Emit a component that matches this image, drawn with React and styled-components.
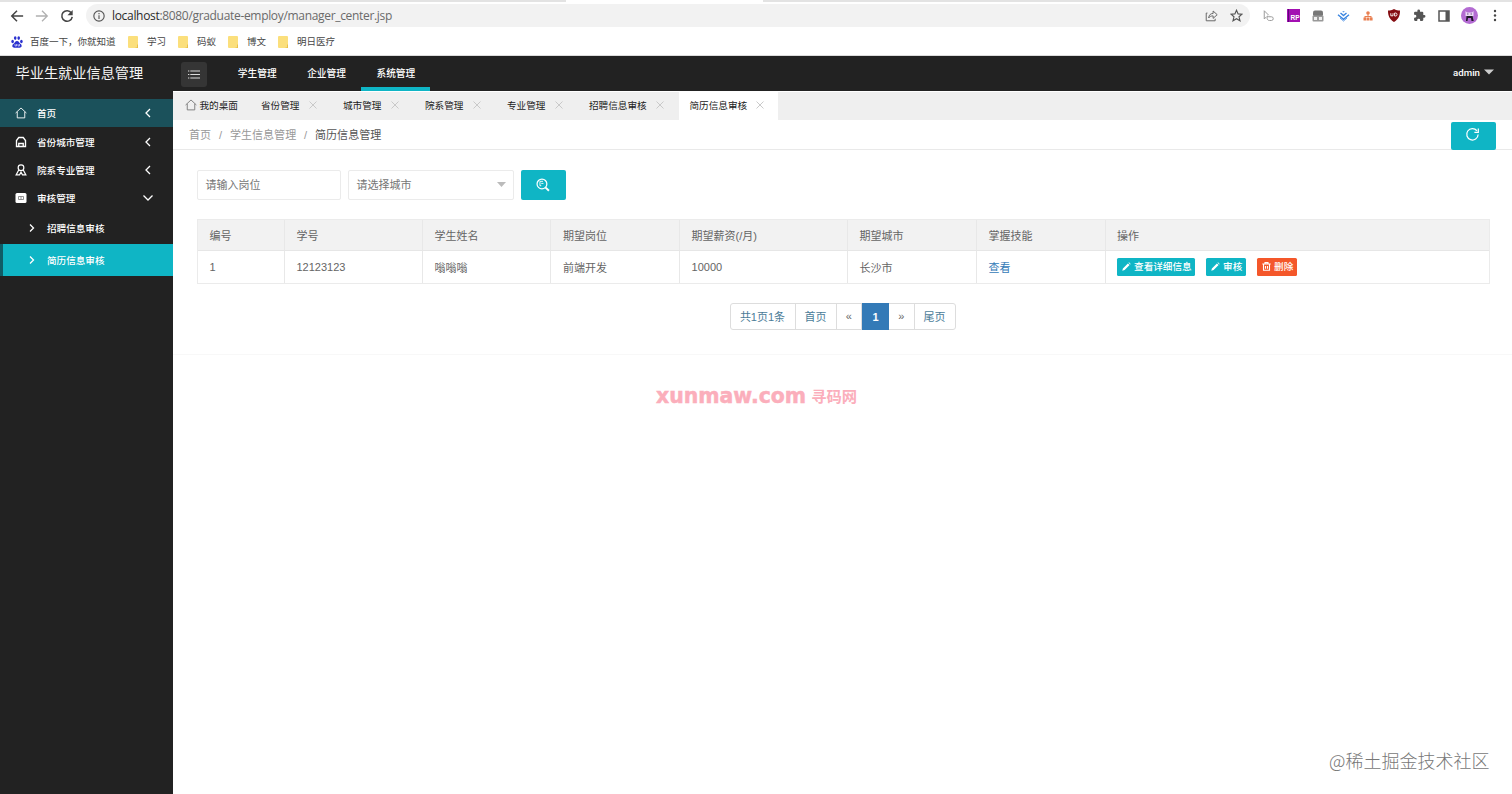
import React from 'react';
import styled, { createGlobalStyle } from 'styled-components';

const teal = '#0fb5c5';

const Global = createGlobalStyle`
  * { box-sizing: border-box; }
  body { margin: 0; background: #fff; font-family: "Liberation Sans", "Noto Sans CJK SC", sans-serif; overflow: hidden; }
  svg { display: block; flex: none; }
`;

const Page = styled.div`
  width: 1512px; height: 794px; display: flex; flex-direction: column; overflow: hidden;
`;

/* browser chrome */
const Chrome = styled.header`
  height: 56px; flex: none; background: #fff; border-bottom: 1px solid #dcdcdc;
  display: flex; flex-direction: column;
`;
const TabEdge = styled.div`
  height: 2px; display: flex; justify-content: space-between;
`;
const EdgePart = styled.div`
  width: ${p => p.$w}px; height: 2px; background: #e3e3e3;
`;
const Toolbar = styled.div`
  height: 27px; display: flex; align-items: center; padding-left: 10px;
`;
const NavIcons = styled.div`
  width: 76px; display: flex; gap: 11px; align-items: center;
`;
const Address = styled.div`
  width: 1164px; height: 23px; border-radius: 12px; background: #f2f2f2;
  display: flex; align-items: center; padding: 0 7px; gap: 7px;
`;
const Url = styled.div`
  flex: 1; font: 12px/22px "Open Sans", sans-serif; color: #6a6a6a; white-space: nowrap;
  letter-spacing: -0.32px;
  b { font-weight: 400; color: #2a2a2a; }
`;
const AddressTools = styled.div`
  display: flex; gap: 12px; align-items: center;
`;
const Extensions = styled.div`
  display: flex; align-items: center; margin-left: 9px;
`;
const Ext = styled.div`
  width: ${p => p.$w}px; display: flex; justify-content: center;
`;
const Bookmarks = styled.div`
  height: 25px; display: flex; align-items: center; padding-left: 11px;
`;
const Bookmark = styled.div`
  display: flex; align-items: center; gap: ${p => p.$gap}px; margin-right: 12.9px;
  font-size: 9.5px; line-height: 14px; color: #444; white-space: nowrap;
  & + & { margin-right: 12.5px; }
`;

/* application frame */
const Shell = styled.div`
  flex: 1; display: flex; min-height: 0;
`;
const Sidebar = styled.aside`
  width: 173px; flex: none; background: #222; color: #fff;
`;
const Brand = styled.div`
  height: 43px; padding: 7px 0 0 15.5px; font-size: 14.2px; line-height: 20px; white-space: nowrap; color: #f5f5f5;
`;
const MenuItem = styled.div`
  height: 28.4px; display: flex; align-items: center; padding: 0 20.5px 0 14.5px; gap: 10.5px;
  font-size: 9.6px; font-weight: 500; white-space: nowrap; color: #fff;
  background: ${p => (p.$current ? '#1b515b' : 'transparent')};
  span { flex: 1; }
`;
const SubItem = styled.div`
  height: 31.5px; display: flex; align-items: center; padding-left: ${p => (p.$active ? 23.5 : 26.5)}px; gap: 10.5px;
  font-size: 9.6px; font-weight: 500; white-space: nowrap; color: #fff;
  background: ${p => (p.$active ? teal : 'transparent')};
  border-left: ${p => (p.$active ? '3px solid #105c66' : '0')};
`;
const Content = styled.div`
  flex: 1; display: flex; flex-direction: column; min-width: 0;
`;
const TopBar = styled.div`
  height: 35px; flex: none; background: #222; display: flex; align-items: center; padding: 0 18px 0 8px;
`;
const Burger = styled.div`
  width: 26px; height: 25px; border-radius: 3px; background: #353535; margin: 1px 15.6px 0 0;
  display: flex; align-items: center; justify-content: center;
`;
const TopLink = styled.div`
  height: 35px; width: 69.3px; text-align: center; color: #fff; font-size: 9.7px; font-weight: 500; line-height: 35px;
  box-shadow: ${p => (p.$active ? `inset 0 -4px ${teal}` : 'none')};
`;
const User = styled.div`
  margin-left: auto; display: flex; gap: 4px; align-items: center; color: #fff;
  font: 500 9.7px/14px Roboto, sans-serif; padding-bottom: 1px;
  svg { margin-bottom: 2px; }
`;
const Tabs = styled.div`
  height: 29px; flex: none; background: #efefef; border-top: 1px solid #fff; display: flex; align-items: stretch;
`;
const Tab = styled.div`
  width: ${p => p.$w}px; padding: 0 0 2px ${p => p.$pl || 11}px; display: flex; align-items: center; gap: ${p => p.$gap || 9}px;
  font-size: 9.65px; color: #222; white-space: nowrap;
  background: ${p => (p.$active ? '#fff' : 'transparent')};
`;
const Crumbs = styled.div`
  height: 30px; flex: none; border-bottom: 1px solid #e9e9e9; padding: 0 16px; display: flex; align-items: center;
  font-size: 11.05px; color: #999; white-space: nowrap;
  i { font-style: normal; width: 18.8px; text-align: center; }
  b { font-weight: 400; color: #555; }
`;
const CrumbText = styled.div`
  display: flex; align-items: baseline; padding-bottom: 1px;
`;
const Refresh = styled.div`
  width: 45px; height: 28px; margin: 2px 0 0 auto; background: ${teal}; border-radius: 2px;
  display: flex; align-items: center; justify-content: center; padding: 0 2px 3px 0;
`;
const Panel = styled.main`
  height: 205px; padding: 20px 23px 0 23.5px; border-bottom: 1px solid #f8f8f8;
`;
const Filters = styled.div`
  display: flex; height: 30px; gap: 7px; margin-bottom: 19px;
`;
const Field = styled.div`
  width: ${p => p.$w}px; border: 1px solid #ebebeb; border-radius: 2px; padding: 0 7px 2px 8px;
  display: flex; align-items: center; justify-content: space-between; font-size: 11px; color: #757575;
`;
const Search = styled.div`
  width: 45px; border-radius: 2px; background: ${teal}; display: flex; align-items: center; justify-content: center;
  padding-right: 1px;
`;
const Table = styled.div`
  border: 1px solid #ebebeb; width: 1293px;
`;
const Row = styled.div`
  display: grid; grid-template-columns: 87px 138px 128.6px 128.5px 168px 129px 129px 1fr;
  height: ${p => (p.$head ? 31 : 32)}px; background: ${p => (p.$head ? '#f2f2f2' : '#fff')};
  border-bottom: ${p => (p.$head ? '1px solid #e6e6e6' : '0')};
`;
const Cell = styled.div`
  padding: 0 0 1px 12px; border-right: 1px solid #e8e8e8; display: flex; align-items: center;
  font-size: 11px; color: #656565; white-space: nowrap;
  &:last-child { border-right: 0; padding-left: 11.5px; }
`;
const Link = styled.span`
  color: #337ab7;
`;
const Action = styled.span`
  width: ${p => p.$w}px; height: 18px; margin-right: ${p => p.$mr || 0}px; border-radius: 1.5px; color: #fff;
  background: ${p => (p.$danger ? '#f4572a' : teal)};
  display: flex; align-items: center; padding: 0 0 1px 5px; gap: 3px; font-size: 9.6px; font-weight: 500;
`;
const Pager = styled.div`
  display: flex; width: 226px; height: 27px; margin: 19px 0 0 533px; border: 1px solid #ddd; border-radius: 3px;
`;
const PageCell = styled.div`
  width: ${p => p.$w}px; display: flex; align-items: center; justify-content: center; font-size: 11px;
  padding-bottom: ${p => (p.$active ? 0 : 1)}px;
  color: ${p => (p.$active ? '#fff' : p.$muted ? '#666' : '#4b7c98')};
  font-weight: ${p => (p.$active ? 700 : 400)};
  background: ${p => (p.$active ? '#337ab7' : 'transparent')};
  margin: ${p => (p.$active ? '-1px 0' : 0)};
  border-right: ${p => (p.$active ? '0' : '1px solid #ddd')};
  &:last-child { border-right: 0; }
`;
const SiteMark = styled.div`
  position: absolute; left: 656px; top: 384px; height: 24px; display: flex; align-items: center; gap: 5px;
  color: #fbaebb; white-space: nowrap; font: 700 20.45px/24px "DejaVu Sans", sans-serif;
  -webkit-text-stroke: 0.5px #fbaebb;
  span { font: 700 15.3px/22px "Noto Sans CJK SC", sans-serif; -webkit-text-stroke: 0; padding-bottom: 2px; }
`;
const CornerMark = styled.div`
  position: absolute; right: 22.5px; top: 748px; font: 300 18px/25px "Noto Sans CJK SC", sans-serif;
  color: #777; white-space: nowrap;
`;

const Svg = ({ s = 12, h, v = '0 0 16 16', w = 1.3, c = 'currentColor', children }) => (
  <svg width={s} height={h || s} viewBox={v} fill="none" stroke={c} strokeWidth={w}>{children}</svg>
);
const Chevron = ({ d, s = 10 }) => (
  <Svg s={s} v="0 0 10 10" w={1.3}>
    <path d={{ left: 'M7 1 3 5l4 4', down: 'M.5 2.500 5 7 9.500 2.500', right: 'M3 1.500 6.500 5 3 8.500' }[d]} />
  </Svg>
);
const Close = () => <Svg s={8} v="0 0 8 8" w={0.9} c="#c4c4c4"><path d="m.5 .5 7 7m0-7-7 7" /></Svg>;
const Home = ({ c }) => <Svg s={12} w={1.2} c={c}><path d="M.8 8 8 1.300 15.200 8M3 6.500v8h10v-8" /></Svg>;
const Folder = () => (
  <svg width="10" height="12" viewBox="0 0 10 12"><rect width="10" height="12" rx="1" fill="#fbdf7c" /><path d="M7.500 12h2.200V8.500" stroke="#e5b93c" fill="none" /></svg>
);
const Pencil = () => <svg width="9" height="9" viewBox="0 0 9 9" fill="#fff"><path d="m.3 8.700.6-2.300 5-5 1.700 1.700-5 5zM6.500.8l.5-.5 1.700 1.700-.5.5z" /></svg>;
const Trash = () => <Svg s={9} v="0 0 9 9" w={1.1} c="#fff"><path d="M.3 2h8.400M3 2V.6h3V2M1.500 2v6.300h6V2M3.500 4v2.700M5.500 4v2.700" /></Svg>;
const Magnifier = () => <Svg s={14} w={1.4} c="#fff"><circle cx="6.800" cy="6.800" r="5.600" /><path d="M8 3.800H4.500v5H6M6 6.200h2.500" strokeWidth="1" /><path d="m11 11 3.800 3.600" strokeWidth="2.300" /></Svg>;

const openTabs = [
  ['省份管理', 82], ['城市管理', 82], ['院系管理', 82], ['专业管理', 82], ['招聘信息审核', 101], ['简历信息审核', 99],
];
const columns = ['编号', '学号', '学生姓名', '期望岗位', '期望薪资(/月)', '期望城市', '掌握技能', '操作'];
const record = ['1', '12123123', '嗡嗡嗡', '前端开发', '10000', '长沙市'];

function BrowserChrome() {
  return (
    <Chrome>
      <TabEdge><EdgePart $w={566} /><EdgePart $w={749} /></TabEdge>
      <Toolbar>
        <NavIcons>
          <Svg s={14} w={1.7} c="#444"><path d="M15 8H2M8 2 2 8l6 6" /></Svg>
          <Svg s={14} w={1.5} c="#b0b0b0"><path d="M1 8h13M8 2l6 6-6 6" /></Svg>
          <Svg s={14} w={1.8} c="#444"><path d="M13 4.500A6 6 0 1 0 14 9" /><path d="M14.500 1v6h-6z" fill="#444" stroke="none" /></Svg>
        </NavIcons>
        <Address>
          <Svg s={12} w={1.5} c="#555"><circle cx="8" cy="8" r="6.900" /><path d="M8 7v5M8 4v1.500" /></Svg>
          <Url><b>localhost</b>:8080/graduate-employ/manager_center.jsp</Url>
          <AddressTools>
            <Svg s={13} w={1.2} c="#666"><path d="M3 5H1.500v9.500h11V12M4.500 11C5 7 7 5.500 10 5.500V2.500L15 7l-5 4.500v-3C7.500 8.500 6 9 4.500 11z" /></Svg>
            <Svg s={13} w={1.4} c="#555"><path d="m8 1.500 2 4.500 4.800.4-3.700 3.200 1.200 4.900L8 11.900l-4.300 2.600 1.200-4.900L1.200 6.400 6 6z" /></Svg>
          </AddressTools>
        </Address>
        <Extensions>
          <Ext $w={18}><Svg s={12} w={1.3} c="#999"><path d="M3 1v11l3-3M3 1l6 6M7 8v2a3 3 0 0 0 3 4h2.500a2.500 2.500 0 0 0 0-5H9z" /></Svg></Ext>
          <Ext $w={32}>
            <svg width="13" height="13" viewBox="0 0 13 13"><rect width="13" height="13" fill="#a30fb2" /><path d="M1.500 0v13" stroke="#5d0877" /><text x="3.500" y="11" fontSize="6.500" fontWeight="700" fill="#fff" fontFamily="Liberation Sans">RP</text></svg>
          </Ext>
          <Ext $w={18}><svg width="12" height="12" viewBox="0 0 12 12"><rect y=".5" x="1" width="10" height="6" rx="2" fill="#777" /><rect x=".5" y="5.500" width="11" height="6" rx="1" fill="#999" /><rect x="2" y="7" width="3" height="3" fill="#eee" /><rect x="7" y="7" width="3" height="3" fill="#eee" /></svg></Ext>
          <Ext $w={32}><Svg s={13} v="0 0 13 13" w={1.4} c="#3a85e0"><path d="m1 5.700 5.500 4.600L12 5.700M3.500 4l3 2.500 3-2.500" /><path d="M5.200 2.200h2.600L6.500 3.400z" fill="#3a85e0" stroke="none" /><path d="m3 9 3.500 3L10 9" strokeWidth=".8" /></Svg></Ext>
          <Ext $w={18}><svg width="10" height="10" viewBox="0 0 10 10" fill="#e98052"><circle cx="5" cy="2" r="1.800" /><path d="M4.500 3h1v2h3v2h-1V6h-5v1h-1V5h3z" /><rect x=".5" y="6.500" width="3" height="3" /><rect x="3.900" y="6.500" width="2.300" height="3" /><rect x="6.600" y="6.500" width="3" height="3" /></svg></Ext>
          <Ext $w={33}><svg width="12" height="13" viewBox="0 0 12 13"><path d="M6 0c2 1.300 4 1.600 6 1.600C12 7 10.500 10.500 6 13 1.500 10.500 0 7 0 1.600 2 1.600 4 1.300 6 0z" fill="#850d12" /><path d="M2.800 4.200v2.600h2.200V4.200M6.600 4v3h1.200c1.600 0 1.600-3 0-3z" stroke="#fff" fill="none" strokeWidth=".9" /></svg></Ext>
          <Ext $w={18}><svg width="13" height="13" viewBox="0 0 24 24" fill="#555"><path d="M20.500 11H19V7a2 2 0 0 0-2-2h-4V3.500a2.500 2.500 0 0 0-5 0V5H4a2 2 0 0 0-2 2v3.800h1.500a2.700 2.700 0 0 1 0 5.400H2V20c0 1.100.9 2 2 2h3.800v-1.500a2.700 2.700 0 0 1 5.400 0V22H17a2 2 0 0 0 2-2v-4h1.500a2.500 2.500 0 0 0 0-5z" /></svg></Ext>
          <Ext $w={32}><svg width="12" height="12" viewBox="0 0 12 12"><rect x="1" y="1" width="10" height="10" fill="none" stroke="#555" strokeWidth="1.500" /><path d="M7.500 1H11v10H7.500z" fill="#555" /></svg></Ext>
          <Ext $w={19}><svg width="17" height="17" viewBox="0 0 17 17"><circle cx="8.500" cy="8.500" r="8.500" fill="#b36bd2" /><path d="m4.500 4 1.500 1.500h5L12.500 4v5h-8z" fill="#ead9f4" /><path d="M6 6.500h1.500v1H6zM9.500 6.500H11v1H9.500z" fill="#6b4586" /><path d="M5.500 9h6l1.200 5h-2.200l-.5-3H7l-.5 3H5z" fill="#1d1727" /></svg></Ext>
          <Ext $w={32}><svg width="4" height="13" viewBox="0 0 4 13" fill="#444"><circle cx="2" cy="2" r="1.200" /><circle cx="2" cy="6.500" r="1.200" /><circle cx="2" cy="11" r="1.200" /></svg></Ext>
        </Extensions>
      </Toolbar>
      <Bookmarks>
        <Bookmark $gap={7}>
          <svg width="12" height="12" viewBox="0 0 12 12" fill="#2b32cf"><ellipse cx="1.600" cy="5.500" rx="1.300" ry="1.700" /><ellipse cx="4.200" cy="2.100" rx="1.300" ry="1.800" /><ellipse cx="7.700" cy="2.100" rx="1.300" ry="1.800" /><ellipse cx="10.400" cy="5.500" rx="1.300" ry="1.700" /><path d="M6 5c2 0 2.300 2 3.700 3.100 1.900 1.500.8 3.900-1.200 3.700-1.700-.2-3.300-.2-5 0-2 .2-3.100-2.200-1.200-3.700C3.700 7 4 5 6 5z" /><path d="M4 8v2h1.500V8M7 8v2h1.500V8" stroke="#fff" strokeWidth=".6" fill="none" /></svg>
          百度一下，你就知道
        </Bookmark>
        {['学习', '码蚁', '博文', '明日医疗'].map(t => <Bookmark key={t} $gap={8.5}><Folder />{t}</Bookmark>)}
      </Bookmarks>
    </Chrome>
  );
}

export default function App() {
  return (
    <Page>
      <Global />
      <BrowserChrome />
      <Shell>
        <Sidebar>
          <Brand>毕业生就业信息管理</Brand>
          <MenuItem $current><Home /><span>首页</span><Chevron d="left" /></MenuItem>
          <MenuItem><Svg s={12} w={1.8}><path d="M2 14V6l3-4h6l3 4v8zM5 13v-3h6v3M5 2h6" /></Svg><span>省份城市管理</span><Chevron d="left" /></MenuItem>
          <MenuItem><Svg s={12} w={1.6}><circle cx="8" cy="5" r="3.800" /><path d="M5 8 1.500 14.500H6L8 11l2 3.500h4.500L11 8" /></Svg><span>院系专业管理</span><Chevron d="left" /></MenuItem>
          <MenuItem><svg width="12" height="12" viewBox="0 0 12 12"><rect x=".5" y="1" width="11" height="10" rx="1.500" fill="#fff" /><path d="M3.500 4.500h5v3h-5zM6 4.500v3" stroke="#777" strokeWidth=".8" fill="none" /></svg><span>审核管理</span><Chevron d="down" /></MenuItem>
          <SubItem><Chevron d="right" />招聘信息审核</SubItem>
          <SubItem $active><Chevron d="right" />简历信息审核</SubItem>
        </Sidebar>
        <Content>
          <TopBar>
            <Burger><Svg s={12} h={9} v="0 0 12 9" w={1.2} c="#ddd"><path d="M0 1h1.300M2.300 1H12M0 4.500h1.300M2.300 4.500H12M0 8h1.300M2.300 8H12" /></Svg></Burger>
            <TopLink>学生管理</TopLink>
            <TopLink>企业管理</TopLink>
            <TopLink $active>系统管理</TopLink>
            <User>admin<svg width="10" height="6" viewBox="0 0 10 6"><path d="M0 .5h10L5 5.500z" fill="#ccc" /></svg></User>
          </TopBar>
          <Tabs>
            <Tab $w={77} $pl={11.5} $gap={3}><Home c="#777" />我的桌面</Tab>
            {openTabs.map(([name, w], i) => <Tab key={name} $w={w} $active={i === 5} $pl={i === 5 ? 10.5 : 11}>{name}<Close /></Tab>)}
          </Tabs>
          <Crumbs>
            <CrumbText>首页<i>/</i>学生信息管理<i>/</i><b>简历信息管理</b></CrumbText>
            <Refresh><Svg s={15} w={1.3} c="#fff"><path d="M12.700 4A6.100 6.100 0 1 0 14 8M14.200 1.500v4.200H10" /></Svg></Refresh>
          </Crumbs>
          <Panel>
            <Filters>
              <Field $w={144}>请输入岗位</Field>
              <Field $w={166}>请选择城市<svg width="9" height="5" viewBox="0 0 9 5"><path d="M0 0h9L4.500 5z" fill="#bbb" /></svg></Field>
              <Search><Magnifier /></Search>
            </Filters>
            <Table>
              <Row $head>{columns.map(c => <Cell key={c}>{c}</Cell>)}</Row>
              <Row>
                {record.map(c => <Cell key={c}>{c}</Cell>)}
                <Cell><Link>查看</Link></Cell>
                <Cell>
                  <Action $w={78} $mr={11}><Pencil />查看详细信息</Action>
                  <Action $w={40} $mr={11}><Pencil />审核</Action>
                  <Action $w={40} $danger><Trash />删除</Action>
                </Cell>
              </Row>
            </Table>
            <Pager>
              <PageCell $w={65}>共1页1条</PageCell>
              <PageCell $w={41}>首页</PageCell>
              <PageCell $w={25.5} $muted>«</PageCell>
              <PageCell $w={27} $active>1</PageCell>
              <PageCell $w={25.5} $muted>»</PageCell>
              <PageCell $w={40}>尾页</PageCell>
            </Pager>
          </Panel>
        </Content>
      </Shell>
      <SiteMark>xunmaw.com<span>寻码网</span></SiteMark>
      <CornerMark>@稀土掘金技术社区</CornerMark>
    </Page>
  );
}
